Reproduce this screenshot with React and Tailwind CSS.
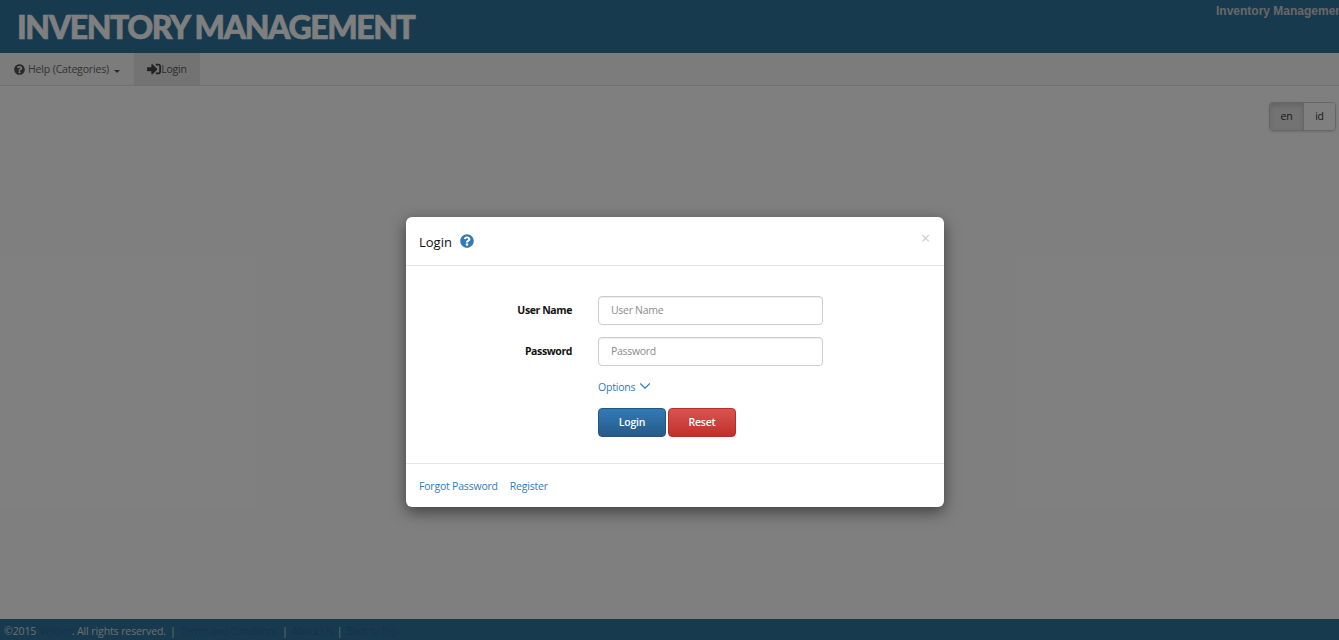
import React from "react";
import { FaQuestionCircle, FaSignInAlt } from "react-icons/fa";
import { ChevronDown } from "lucide-react";

const Field = ({ label, type }) => (
  <div className="flex items-center gap-[26px]">
    <label className="w-[166px] text-right font-bold tracking-[-0.4px] text-[#111]">{label}</label>
    <input
      type={type}
      placeholder={label}
      className="w-[225px] h-[29px] px-[12px] pb-[1px] border border-[#ccc] rounded-[4px] bg-white tracking-[-0.3px] shadow-[inset_0_1px_1px_rgba(0,0,0,0.075)] outline-none placeholder:text-[#8c8c8c]"
    />
  </div>
);

const App = () => {
  return (
    <div className="relative h-[640px] overflow-hidden bg-white flex flex-col font-['Open_Sans',sans-serif] text-[10.5px] tracking-[-0.2px] text-[#333]">
      <header className="h-[53px] bg-[#2e749e] flex justify-between overflow-hidden shrink-0">
        <div className="pl-[17px] pt-[8px] h-[53px] text-[32px] leading-[38px] font-['Lato',sans-serif] font-black text-white tracking-[-1.4px] [-webkit-text-stroke:0.6px_white] whitespace-nowrap">
          INVENTORY MANAGEMENT
        </div>
        <div className="w-[123px] overflow-hidden whitespace-nowrap pt-[3px] text-[12px] leading-[16px] tracking-normal font-['Liberation_Sans',sans-serif] font-bold text-[#d0d0d0]">
          Inventory Management
        </div>
      </header>

      <nav className="h-[33px] bg-[#f8f8f8] border-b border-[#e0e0e0] flex shrink-0">
        <div className="w-[134px] flex items-center pl-[14px] pt-[2px] tracking-[-0.15px] whitespace-nowrap">
          <FaQuestionCircle className="w-[11px] h-[11px] mr-[3px] mb-[2px] text-[#555]" />
          <span className="text-[#666]">Help (Categories)</span>
          <span className="ml-[5px] mt-[2px] border-x-[3px] border-x-transparent border-t-[3px] border-t-[#555]"></span>
        </div>
        <div className="w-[66px] bg-[#e7e7e7] flex items-center justify-center pt-[2px] text-[#555]">
          <FaSignInAlt className="w-[14px] h-[14px] mb-[2px] text-[#444]" />
          <span>Login</span>
        </div>
      </nav>

      <main className="flex-1 flex justify-end items-start pt-[16px] pr-[3px]">
        <div className="flex h-[29px] border border-[#ccc] rounded-[4px] overflow-hidden shadow-sm">
          <div className="w-[34px] flex items-center justify-center bg-[#e6e6e6] shadow-[inset_0_3px_5px_rgba(0,0,0,0.125)] border-r border-[#ccc]">en</div>
          <div className="w-[31px] flex items-center justify-center bg-white">id</div>
        </div>
      </main>

      <footer className="h-[21px] bg-[#2e749e] shrink-0 pl-[4px] pt-[4px] flex items-center text-[#ddd] tracking-[-0.1px] whitespace-nowrap">
        <span>©2015</span>
        <span className="ml-[3px] text-[#2a6496]">Veloxn</span>
        <span>. All rights reserved.</span>
        <span className="ml-[4px] mr-[5px]">|</span>
        <span className="text-[#2a6496] tracking-[-0.5px]">Terms and Conditions</span>
        <span className="mx-[4px]">|</span>
        <span className="text-[#2a6496] tracking-[-0.5px]">About Us</span>
        <span className="mx-[4px]">|</span>
        <span className="text-[#2a6496] tracking-[-0.5px]">Back to Top</span>
      </footer>

      {/* modal backdrop */}
      <div className="absolute inset-0 bg-black/50 pt-[217px] pl-[406px]">
        <div className="w-[538px] h-[290px] bg-white rounded-[6px] shadow-[0_5px_15px_rgba(0,0,0,0.5)] flex flex-col text-[#333]">
          <div className="h-[49px] border-b border-[#e5e5e5] flex items-center pl-[13px] pr-[14px] shrink-0">
            <span className="text-[13px] tracking-normal text-[#111] mt-[3px]">Login</span>
            <FaQuestionCircle className="ml-[8px] w-[14px] h-[14px] text-[#337ab7]" />
            <span className="ml-auto mb-[6px] text-[16px] leading-none text-[#ccc]">×</span>
          </div>

          <div className="flex-1 flex flex-col gap-[12px] pt-[30px]">
            <Field label="User Name" type="text" />
            <Field label="Password" type="password" />
            <div className="pl-[192px] flex flex-col gap-[12px] pt-[2px]">
              <a className="flex items-center h-[16px] gap-[1px] text-[#337ab7]">
                Options
                <ChevronDown className="w-[18px] h-[18px] mb-[4px]" strokeWidth={1.5} />
              </a>
              <div className="flex gap-[2px]">
                <button className="w-[68px] h-[29px] pt-[1px] rounded-[4px] border border-[#245580] bg-gradient-to-b from-[#337ab7] to-[#265a88] text-white font-semibold">Login</button>
                <button className="w-[68px] h-[29px] pt-[1px] rounded-[4px] border border-[#b92c28] bg-gradient-to-b from-[#d9534f] to-[#c12e2a] text-white font-semibold">Reset</button>
              </div>
            </div>
          </div>

          <div className="h-[44px] border-t border-[#e5e5e5] flex items-center pl-[13px] pt-[2px] gap-[12px] text-[#337ab7] shrink-0">
            <a>Forgot Password</a>
            <a>Register</a>
          </div>
        </div>
      </div>
    </div>
  );
};

export default App;
